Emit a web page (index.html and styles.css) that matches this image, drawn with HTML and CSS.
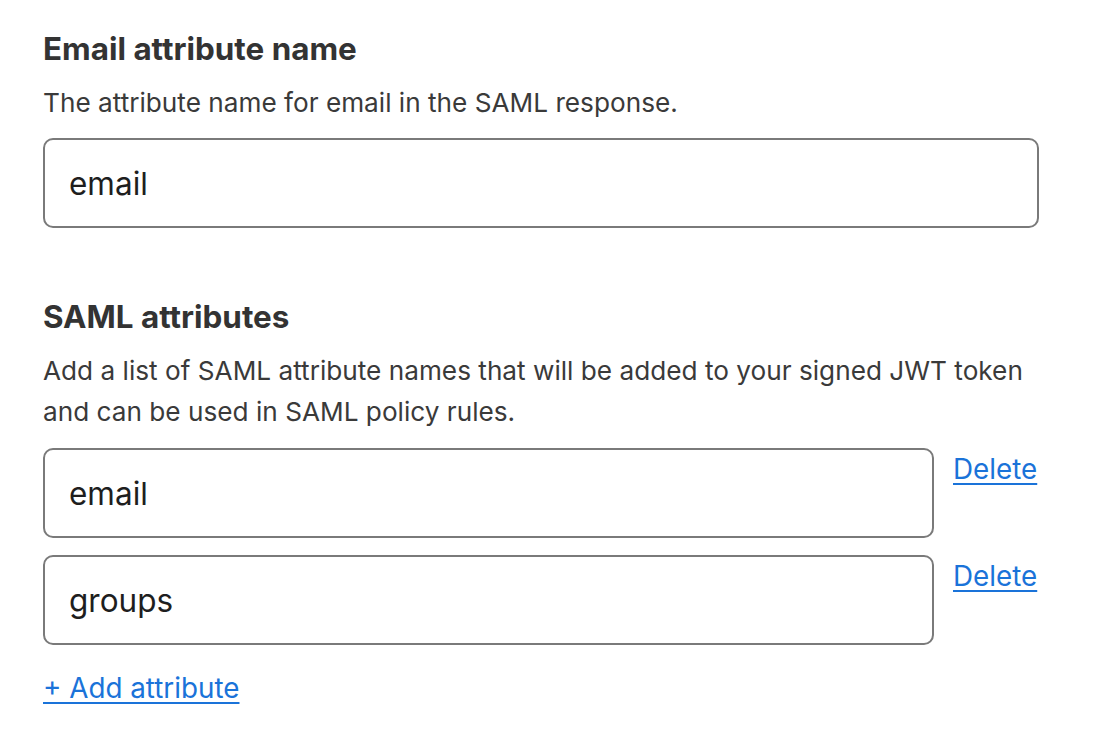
FILE: index.html
```html
<!DOCTYPE html>
<html lang="en">
<head>
<meta charset="utf-8">
<link rel="stylesheet" href="styles.css">
</head>
<body>
<main class="form">
  <section class="field">
    <h2 class="label">Email attribute name</h2>
    <p class="help">The attribute name for email in the SAML response.</p>
    <div class="input full">email</div>
  </section>
  <section class="field second">
    <h2 class="label">SAML attributes</h2>
    <p class="help">Add a list of SAML attribute names that will be added to your signed JWT token and can be used in SAML policy rules.</p>
    <div class="row first">
      <div class="input">email</div>
      <a class="link" href="#">Delete</a>
    </div>
    <div class="row">
      <div class="input">groups</div>
      <a class="link" href="#">Delete</a>
    </div>
    <a class="link add" href="#">+ Add attribute</a>
  </section>
</main>
</body>
</html>
```
FILE: styles.css
```css
html, body {
  margin: 0;
  padding: 0;
  background: #ffffff;
}
body {
  font-family: Inter, "Noto Sans", sans-serif;
  color: #333333;
}
.form {
  width: 996px;
  padding: 26px 0 0 43px;
}
.field {
  display: flex;
  flex-direction: column;
}
.field.second {
  margin-top: 66px;
}
.label {
  margin: 0;
  font-size: 31.4px;
  font-weight: 700;
  line-height: 46px;
  color: #333333;
}
.help {
  margin: 10px 0 0;
  font-size: 26.2px;
  line-height: 41px;
  color: #3a3a3a;
  width: 996px;
}
.input {
  box-sizing: border-box;
  height: 90px;
  border: 2px solid #7a7a7a;
  border-radius: 10px;
  padding: 0 24px;
  display: flex;
  align-items: center;
  font-size: 31.5px;
  color: #1e1e1e;
  width: 891px;
  flex: none;
}
.input.full {
  width: 996px;
  margin-top: 15px;
}
.row {
  display: flex;
  align-items: flex-start;
  gap: 19px;
  margin-top: 17px;
}
.row.first {
  margin-top: 16px;
}
.link {
  color: #1a73d9;
  font-size: 27.8px;
  line-height: 42px;
  text-decoration: underline;
  text-underline-offset: 4px;
  text-decoration-thickness: 2px;
}
.add {
  align-self: flex-start;
  margin-top: 22px;
}
```
